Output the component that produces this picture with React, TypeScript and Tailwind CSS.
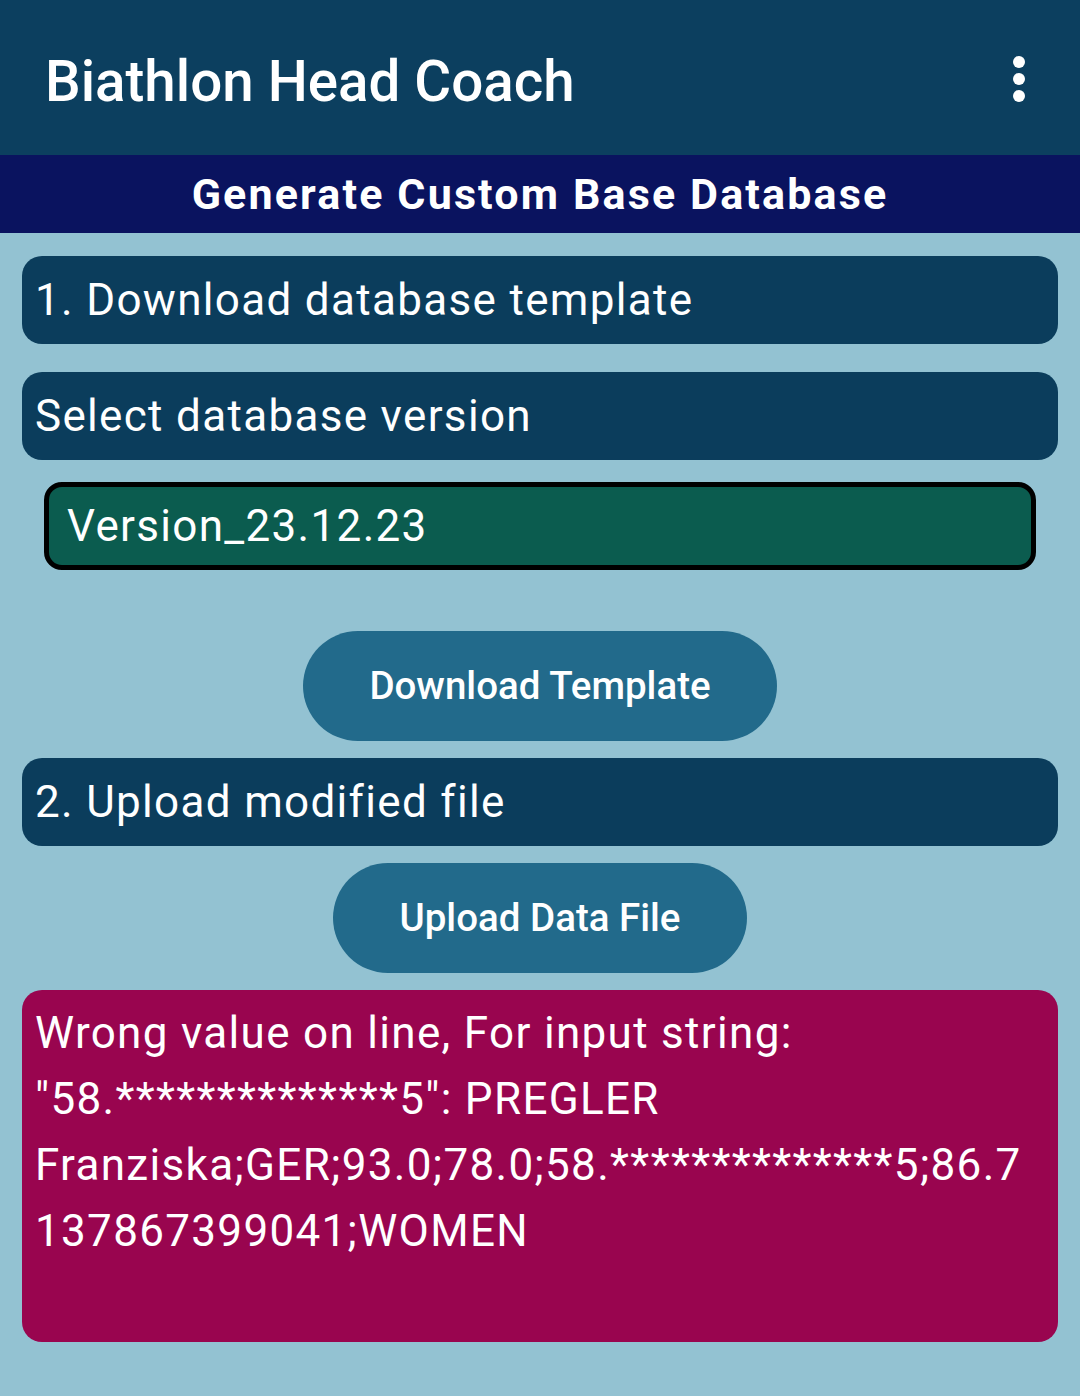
import React from "react";

export default function App() {
  return (
    <div className="w-[1080px] h-[1396px] bg-[#93c2d2] flex flex-col" style={{ fontFamily: "Roboto, 'Liberation Sans', sans-serif" }}>
      <div className="h-[155px] bg-[#0c3f5f] flex items-center justify-between pl-[45px] pr-[55px]">
        <div className="text-white text-[56.5px] font-medium leading-none pt-[10px]">Biathlon Head Coach</div>
        <div className="flex flex-col gap-[5px] items-center pt-[2px]">
          <div className="w-[12px] h-[12px] rounded-full bg-white" />
          <div className="w-[12px] h-[12px] rounded-full bg-white" />
          <div className="w-[12px] h-[12px] rounded-full bg-white" />
        </div>
      </div>
      <div className="h-[78px] bg-[#0a135f] flex items-center justify-center">
        <div className="text-white text-[43px] font-bold tracking-[0.05em] leading-none">Generate Custom Base Database</div>
      </div>
      <div className="flex flex-col px-[22px] pt-[23px]">
        <div className="h-[88px] bg-[#0b3d5c] rounded-[20px] flex items-center px-[13px]">
          <span className="text-white text-[44px] tracking-[0.03em] leading-none">1. Download database template</span>
        </div>
        <div className="h-[88px] bg-[#0b3d5c] rounded-[20px] flex items-center px-[13px] mt-[28px]">
          <span className="text-white text-[44px] tracking-[0.03em] leading-none">Select database version</span>
        </div>
        <div className="mx-[22px] mt-[22px] h-[88px] bg-[#0b5c4f] border-[5px] border-black rounded-[18px] flex items-center px-[18px]">
          <span className="text-white text-[44px] tracking-[0.03em] leading-none">Version_23.12.23</span>
        </div>
        <div className="flex justify-center mt-[61px]">
          <div className="w-[474px] h-[110px] rounded-full bg-[#226a8b] flex items-center justify-center">
            <span className="text-white text-[38.5px] font-medium leading-none">Download Template</span>
          </div>
        </div>
        <div className="h-[88px] bg-[#0b3d5c] rounded-[20px] flex items-center px-[13px] mt-[17px]">
          <span className="text-white text-[44px] tracking-[0.03em] leading-none">2. Upload modified file</span>
        </div>
        <div className="flex justify-center mt-[17px]">
          <div className="w-[414px] h-[110px] rounded-full bg-[#226a8b] flex items-center justify-center">
            <span className="text-white text-[38.5px] font-medium leading-none">Upload Data File</span>
          </div>
        </div>
        <div className="mt-[17px] h-[352px] bg-[#99054f] rounded-[20px] px-[13px] pt-[10px]">
          <div className="text-white text-[44px] tracking-[0.03em] leading-[66px] break-words">
            Wrong value on line, For input string: "58.**************5": PREGLER Franziska;GER;93.0;78.0;58.**************5;86.7137867399041;WOMEN
          </div>
        </div>
      </div>
    </div>
  );
}
